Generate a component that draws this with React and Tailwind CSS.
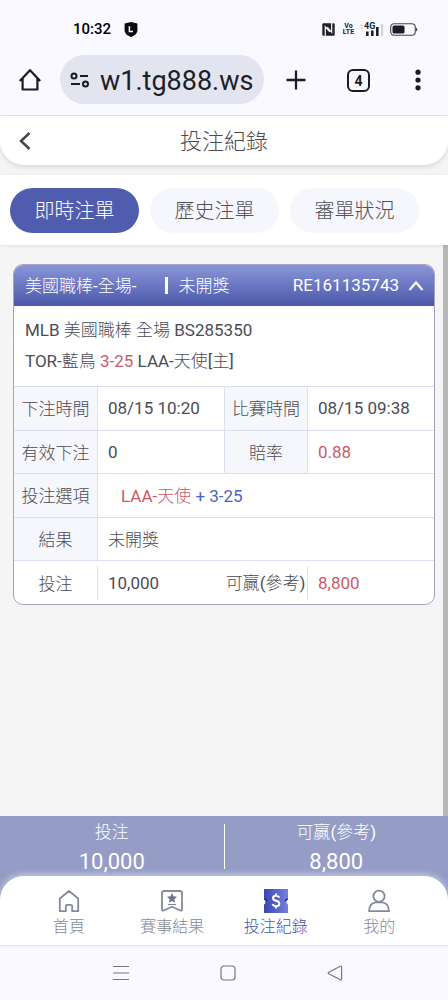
import React from "react";

const CJK = "font-['Noto_Sans_CJK_TC',sans-serif] font-light";

function Zh({ children }) {
  return <span className={CJK}>{children}</span>;
}

function StatusBar() {
  return (
    <div className="flex h-[54px] items-center pt-1 pr-[30px] pl-[73px] text-black">
      <span className="font-['Roboto',sans-serif] text-[15px] font-medium">10:32</span>
      <svg className="ml-[13px] h-[15px] w-[14px]" viewBox="0 0 14 15" aria-hidden="true">
        <path d="M7 0 13.4 1.6V8.6C13.4 11.6 10.4 13.8 7 15 3.6 13.8.6 11.6.6 8.6V1.6Z" fill="#0b0b0d" />
        <path d="M5.4 4.2V9.6H9" fill="none" stroke="#fff" strokeWidth="1.5" />
      </svg>
      <div className="ml-auto flex items-center text-[#202024]">
        <svg className="h-[13px] w-[13px]" viewBox="0 0 13 13" aria-hidden="true">
          <rect x=".3" y=".3" width="12.400" height="12.400" rx="1.200" fill="#202024" />
          <path d="M3.300 13V3.800L7.800 8.800M9.700 0V9.200L5.200 4.200" fill="none" stroke="#f9f9ff" strokeWidth="1.200" />
        </svg>
        <span className="ml-2 flex w-[11px] flex-col items-center font-['Roboto',sans-serif] text-[7px] leading-[6px] font-bold">
          <span>Vo</span>
          <span>LTE</span>
        </span>
        <svg className="ml-[5px] h-[15px] w-[25px]" viewBox="0 0 25 15" aria-hidden="true">
          <path d="M1 4 2.5 2 4 4ZM1 5.5 2.5 7.5 4 5.5Z" fill="#c6c6cc" />
          <text x="5" y="7" fontSize="9" fontWeight="700" fontFamily="Roboto, sans-serif" fill="#202024">4G</text>
          <path d="M7 9.500h2.600v4.500H7ZM12 8.500h2.600V14H12ZM17 5h2.600v9H17Z" fill="#202024" />
          <path d="M22 2h2.200v12H22Z" fill="#d3d3da" />
        </svg>
        <svg className="ml-[6px] h-[13px] w-[28px]" viewBox="0 0 28 13" aria-hidden="true">
          <rect x=".7" y=".7" width="24.600" height="11.600" rx="3.500" fill="none" stroke="#45454b" strokeWidth="1.100" />
          <rect x="2.500" y="2.500" width="12" height="8" rx="1.600" fill="#1c1c20" />
          <path d="M26 4.500q2.600 2 0 4Z" fill="#45454b" />
        </svg>
      </div>
    </div>
  );
}

function BrowserBar() {
  return (
    <div className="flex h-[62px] items-start border-b border-[#e6e6ec] pt-px pr-[23px] pl-[17px] text-[#1b1b20]">
      <button type="button" aria-label="Home" className="mt-[12px] flex h-[26px] w-[26px] items-center justify-center">
        <svg className="h-[26px] w-[26px]" viewBox="0 0 26 26" fill="none" stroke="currentColor" strokeWidth="2.200" aria-hidden="true">
          <path d="M2.800 14 13 3.200 23.200 14M5.600 11.500V22.500H20.400V11.500" strokeLinejoin="round" />
        </svg>
      </button>
      <div className="ml-[17px] flex h-[49px] min-w-0 flex-1 items-center rounded-full bg-[#e2e4ef] pl-[10px]">
        <svg className="h-[16px] w-[20px] shrink-0" viewBox="0 0 20 16" fill="none" stroke="currentColor" strokeWidth="2" aria-hidden="true">
          <circle cx="4" cy="4" r="2.500" />
          <path d="M10 4H18M1 12H10" />
          <circle cx="15.500" cy="12" r="2.500" />
        </svg>
        <input
          aria-label="Address"
          defaultValue="w1.tg888.ws"
          className="mt-1 ml-[10px] w-full min-w-0 bg-transparent font-['Roboto',sans-serif] text-[27px] text-[#1d1e26] outline-none"
        />
      </div>
      <button type="button" aria-label="New tab" className="mt-[14px] ml-[21px]">
        <svg className="h-[22px] w-[22px]" viewBox="0 0 22 22" stroke="currentColor" strokeWidth="2.300" aria-hidden="true">
          <path d="M11 1.500V20.500M1.500 11H20.500" />
        </svg>
      </button>
      <button
        type="button"
        aria-label="Tabs"
        className="mt-[14px] ml-[40px] flex h-[23px] w-[23px] items-center justify-center rounded-[6px] border-2 border-[#1b1b20] font-['Roboto',sans-serif] text-[14px] leading-none font-bold"
      >
        4
      </button>
      <button type="button" aria-label="Menu" className="mt-[14px] ml-[41px]">
        <svg className="h-[22px] w-[14px]" viewBox="0 0 14 22" fill="currentColor" aria-hidden="true">
          <circle cx="7" cy="3.200" r="2.600" />
          <circle cx="7" cy="11" r="2.600" />
          <circle cx="7" cy="18.800" r="2.600" />
        </svg>
      </button>
    </div>
  );
}

function PageHeader() {
  return (
    <header className="grid h-[49px] grid-cols-[40px_1fr_40px] items-center rounded-b-[24px] bg-white shadow-[0_2px_5px_rgba(0,0,0,0.12)]">
      <button type="button" aria-label="Back" className="pl-[18px]">
        <svg className="h-[20px] w-[14px]" viewBox="0 0 14 20" fill="none" stroke="#45464e" strokeWidth="2.500" aria-hidden="true">
          <path d="M11.500 2 3 10 11.500 18" />
        </svg>
      </button>
      <h1 className={`${CJK} pb-[3px] text-center text-[22px] leading-8 text-[#4b4c55]`}>投注紀錄</h1>
    </header>
  );
}

const tabs = ["即時注單", "歷史注單", "審單狀況"];

function Tabs() {
  return (
    <nav className="relative mt-[10px] flex h-[70px] items-center gap-[11px] bg-white px-[10px] shadow-[0_1px_4px_rgba(0,0,0,0.08)]">
      {tabs.map((t, i) => (
        <button
          key={t}
          type="button"
          className={`${CJK} h-[45px] w-[129px] rounded-full text-[20px] ${
            i === 0 ? "bg-[#505dae] text-white" : "bg-[#f6f7fc] text-[#50515a]"
          }`}
        >
          {t}
        </button>
      ))}
    </nav>
  );
}

const label = `${CJK} bg-[#f6f7fc] p-0 text-center whitespace-nowrap`;
const line = "border-t border-[#dddff0]";
const value = "border-l border-[#dddff0] py-0 pr-0 pl-[10px] text-left whitespace-nowrap";
const row = "h-[43px]";

function BetCard() {
  return (
    <article className="overflow-hidden rounded-[10px] border border-[#a3a3c4] bg-white font-['Roboto','Noto_Sans_CJK_TC',sans-serif] text-[17px] text-[#4b4c55]">
      <button
        type="button"
        aria-expanded="true"
        className="flex h-[41px] w-full items-center bg-gradient-to-b from-[#8b95d8] to-[#4c59aa] pr-[10px] pl-[11px] text-white"
      >
        <span><Zh>美國職棒</Zh>-<Zh>全場</Zh>-</span>
        <span className="ml-[29px] h-[17px] w-[3px] bg-white" />
        <span className="ml-[10px]"><Zh>未開獎</Zh></span>
        <span className="ml-auto">RE161135743</span>
        <svg className="ml-[9px] h-[12px] w-[16px]" viewBox="0 0 16 12" fill="none" stroke="currentColor" strokeWidth="2.200" aria-hidden="true">
          <path d="M1.500 10 8 2.500 14.500 10" />
        </svg>
      </button>
      <div className="h-[80px] px-[11px] pt-[8px] leading-[30px]">
        <p>MLB <Zh>美國職棒</Zh> <Zh>全場</Zh> BS285350</p>
        <p>
          TOR-<Zh>藍鳥</Zh> <span className="text-[#cc5a68]">3-25</span> LAA-<Zh>天使</Zh>[<Zh>主</Zh>]
        </p>
      </div>
      <table className="h-[218px] w-full table-fixed border-separate border-spacing-0 leading-6">
        <colgroup>
          <col className="w-[83px]" />
          <col />
          <col className="w-[83px]" />
          <col className="w-[127px]" />
        </colgroup>
        <tbody>
          <tr className={row}>
            <th className={`${label} ${line}`}>下注時間</th>
            <td className={`${value} ${line}`}>08/15 10:20</td>
            <th className={`${label} ${line} border-l`}>比賽時間</th>
            <td className={`${value} ${line}`}>08/15 09:38</td>
          </tr>
          <tr className={row}>
            <th className={`${label} ${line}`}>有效下注</th>
            <td className={`${value} ${line}`}>0</td>
            <th className={`${label} ${line} border-l`}>賠率</th>
            <td className={`${value} ${line} text-[#cc5a68]`}>0.88</td>
          </tr>
          <tr className={row}>
            <th className={`${label} ${line}`}>投注選項</th>
            <td colSpan={3} className={`${value} ${line}`}>
              <span className="pl-[13px] text-[#cc5a68]">LAA-<Zh>天使</Zh></span>
              <span className="text-[#4a63c4]"> + 3-25</span>
            </td>
          </tr>
          <tr className={row}>
            <th className={`${label} ${line}`}>結果</th>
            <td colSpan={3} className={`${value} ${line}`}><Zh>未開獎</Zh></td>
          </tr>
          <tr className={row}>
            <th className={`${CJK} ${line} p-0 text-center`}>投注</th>
            <td className={`${line} p-0`}>
              <div className="flex h-[34px] items-center border-l border-[#dddff0] pl-[10px]">10,000</div>
            </td>
            <th className={`${line} p-0 text-center font-normal whitespace-nowrap`}>
              <Zh>可贏</Zh>(<Zh>參考</Zh>)
            </th>
            <td className={`${line} p-0`}>
              <div className="flex h-[34px] items-center border-l border-[#dddff0] pl-[10px] text-[#cc5a68]">8,800</div>
            </td>
          </tr>
        </tbody>
      </table>
    </article>
  );
}

function Summary() {
  return (
    <section className="flex h-[84px] items-start bg-[#959cc5] pt-px text-center font-['Roboto',sans-serif] text-white">
      <div className="flex-1">
        <p className="text-[17px] leading-[28px]"><Zh>投注</Zh></p>
        <p className="text-[22px] leading-[32px]">10,000</p>
      </div>
      <div className="mt-[7px] h-[45px] w-px bg-white" />
      <div className="flex-1">
        <p className="text-[17px] leading-[28px]"><Zh>可贏</Zh>(<Zh>參考</Zh>)</p>
        <p className="text-[22px] leading-[32px]">8,800</p>
      </div>
    </section>
  );
}

const icons = {
  home: (
    <svg className="h-[24px] w-[24px]" viewBox="0 0 24 24" fill="none" stroke="#858a9b" strokeWidth="1.800" strokeLinejoin="round" aria-hidden="true">
      <path d="M2.800 9.500 12 2 21.200 9.500V22.200H15.200V17.500Q15.200 15.800 13.500 15.800H10.500Q8.800 15.800 8.800 17.500V22.200H2.800Z" />
    </svg>
  ),
  result: (
    <svg className="h-[24px] w-[24px]" viewBox="0 0 24 24" aria-hidden="true">
      <path d="M4 2H20Q22 2 22 4V20.500Q22 22.200 20.400 21.500L12 17.800 3.600 21.500Q2 22.200 2 20.500V4Q2 2 4 2Z" fill="none" stroke="#858a9b" strokeWidth="1.800" strokeLinejoin="round" />
      <path d="M12 4 13.500 7.300 17 7.700 14.400 10.200 15.100 13.700 12 11.900 8.900 13.700 9.600 10.200 7 7.700 10.500 7.300Z" fill="#6f7489" />
      <path d="M8 15.500H16" stroke="#858a9b" strokeWidth="1.200" />
    </svg>
  ),
  bets: (
    <svg className="h-[24px] w-[24px]" viewBox="0 0 24 24" aria-hidden="true">
      <defs>
        <linearGradient id="ticket" x1="0" x2="1">
          <stop offset="0" stopColor="#3a48b0" />
          <stop offset="1" stopColor="#7380e0" />
        </linearGradient>
      </defs>
      <path d="M0 0H24V24H0Z" fill="url(#ticket)" />
      <path d="M0 10.500A2.800 2.800 0 0 1 0 15.500ZM24 10.500A2.800 2.800 0 0 0 24 15.500Z" fill="#fff" />
      <path d="M0 10.200Q2.600 10.200 2.900 12.500M24 10.200Q21.400 10.200 21.100 12.500" fill="none" stroke="#232c78" strokeWidth="1.200" />
      <path d="M15.300 8.600Q14.600 6.700 12 6.700 9 6.700 9 9.100 9 11.200 12 11.800 15.300 12.400 15.300 14.700 15.300 17.200 12 17.200 9.200 17.200 8.600 15.100M12 4.500V7M12 17V19.400" fill="none" stroke="#fff" strokeWidth="2" />
    </svg>
  ),
  me: (
    <svg className="h-[24px] w-[24px]" viewBox="0 0 24 24" fill="none" stroke="#858a9b" strokeWidth="1.800" strokeLinejoin="round" aria-hidden="true">
      <circle cx="12" cy="7.200" r="5.600" />
      <path d="M2 22.200Q2.500 14 8.600 13.300H15.400Q21.500 14 22 22.200Z" />
    </svg>
  ),
};

const items = [
  { id: "home", name: "首頁" },
  { id: "result", name: "賽事結果" },
  { id: "bets", name: "投注紀錄", active: true },
  { id: "me", name: "我的" },
];

function BottomNav() {
  return (
    <nav className="relative -mt-6 flex h-[70px] rounded-t-[24px] border-b border-[#e6e6ec] bg-white px-[17px] pt-[13px] shadow-[0_-2px_6px_rgba(214,218,245,0.7)]">
      {items.map((it) => (
        <a
          key={it.id}
          href={`#${it.id}`}
          className={`${CJK} flex flex-1 flex-col items-center text-[16px] leading-6 ${it.active ? "text-[#4553ad]" : "text-[#858a96]"}`}
        >
          {icons[it.id]}
          <span>{it.name}</span>
        </a>
      ))}
    </nav>
  );
}

function SystemNav() {
  return (
    <div className="flex h-[54px] items-center justify-center gap-[91px] bg-[#f9f9ff] pl-[7px]">
      <button type="button" aria-label="Recent apps">
        <svg className="h-[16px] w-[16px]" viewBox="0 0 16 16" stroke="#77787e" strokeWidth="1.200" aria-hidden="true">
          <path d="M0 1.500H16M0 8H16M0 14.500H16" />
        </svg>
      </button>
      <button type="button" aria-label="Home screen">
        <svg className="h-[16px] w-[16px]" viewBox="0 0 16 16" fill="none" stroke="#77787e" strokeWidth="1.200" aria-hidden="true">
          <rect x="1" y="1" width="14" height="14" rx="3" />
        </svg>
      </button>
      <button type="button" aria-label="Go back">
        <svg className="h-[16px] w-[16px]" viewBox="0 0 16 16" fill="none" stroke="#77787e" strokeWidth="1.200" strokeLinejoin="round" aria-hidden="true">
          <path d="M1.800 7.200 13.300 1.200Q14.600.8 14.600 2V14Q14.600 15.200 13.300 14.800L1.800 8.800Q.6 8 1.800 7.200Z" />
        </svg>
      </button>
    </div>
  );
}

export default function App() {
  return (
    <div className="flex min-h-screen flex-col bg-[#f5f5f6]">
      <div className="bg-[#f9f9ff]">
        <StatusBar />
        <BrowserBar />
      </div>
      <PageHeader />
      <Tabs />
      <main className="flex flex-1">
        <div className="min-w-0 flex-1 pt-[19px] pr-[8px] pl-[13px]">
          <BetCard />
        </div>
        <div className="w-[5px] bg-[#b7b7b8]" />
      </main>
      <Summary />
      <BottomNav />
      <SystemNav />
    </div>
  );
}
